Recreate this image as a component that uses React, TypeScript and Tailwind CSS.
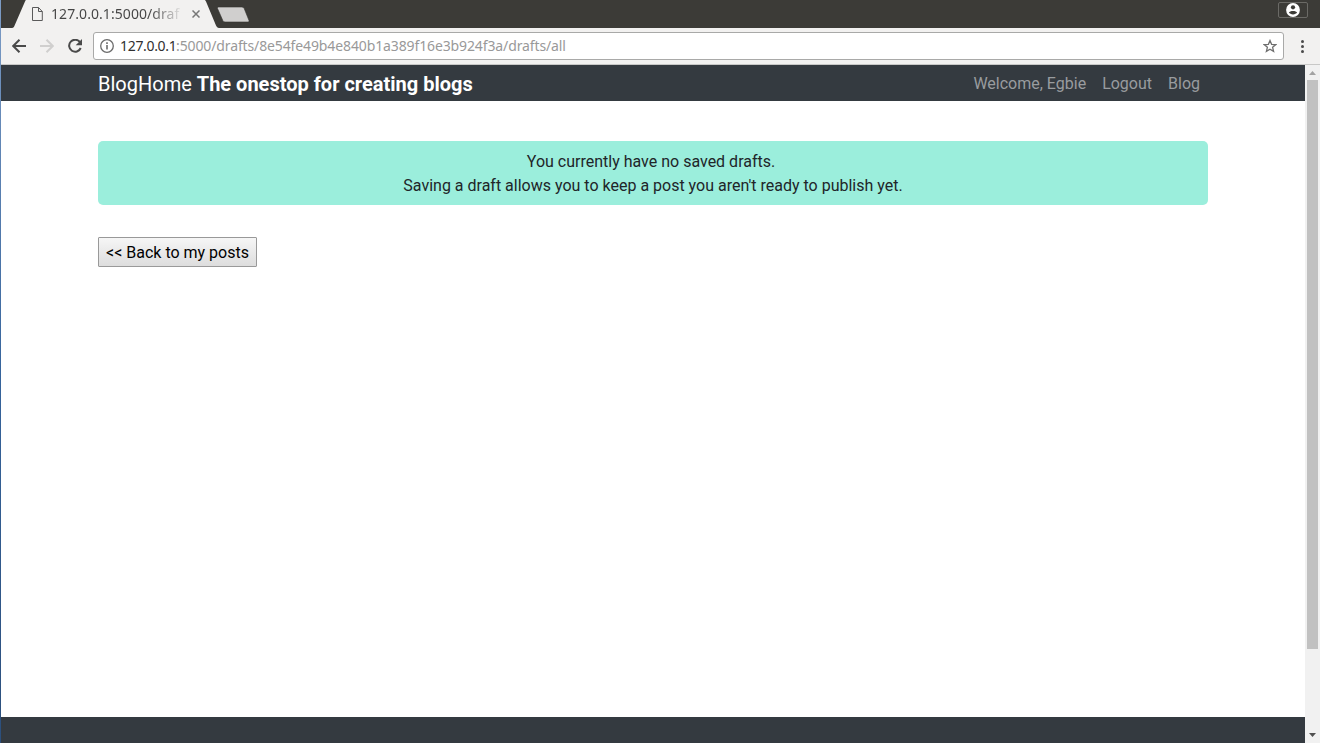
import React from "react";

function TabStrip() {
  return (
    <div className="flex h-7 shrink-0 items-start bg-[#3c3b37]">
      <div className="relative ml-[11px] h-7 w-[208px]">
        <svg className="absolute inset-0" width="208" height="28" viewBox="0 0 208 28">
          <path d="M0 28 C1.5 28 2 27 2.6 25.5 L13 1.5 L13.8 0 H193 L194 1.5 L204 25.5 C204.8 27 205.500 28 207 28 Z" fill="#f2f1f0" />
        </svg>
        <div className="relative flex h-7 items-center pl-5">
          <svg width="11" height="14" viewBox="0 0 11 14" fill="none" stroke="#5a5a5a">
            <path d="M0.500 0.500 H6.500 L10.300 4.500 V13.500 H0.500 Z" />
            <path d="M6.500 0.500 V4.500 H10.300" />
          </svg>
          <div className="ml-2 w-[132px] overflow-hidden whitespace-nowrap bg-[linear-gradient(90deg,#444_0,#444_100px,transparent_132px)] bg-clip-text font-['Noto_Sans',sans-serif] text-sm tracking-[0.07px] text-transparent">
            127.0.0.1:5000/draf
          </div>
          <svg className="ml-[9px]" width="8" height="8" viewBox="0 0 8 8" stroke="#777" strokeWidth="1.5">
            <path d="M0.500 0.500 L7.500 7.500 M7.500 0.500 L0.500 7.500" />
          </svg>
        </div>
      </div>
      <svg className="-ml-[4px] mt-[6px]" width="34" height="17" viewBox="0 0 34 17">
        <path d="M2.500 1 H26 Q27.500 1 28.200 2.500 L33 14.500 Q33.500 16 32 16 H9 Q7.500 16 6.800 14.500 L1.500 2.500 Q1 1 2.500 1 Z" fill="#d0cfce" stroke="#33322f" strokeWidth="0.600" />
      </svg>
      <div className="ml-auto mr-3 mt-[2px] flex h-4 w-[30px] items-center justify-center rounded-[2px] border border-[#6b6a66]">
        <svg width="14" height="14" viewBox="0 0 14 14">
          <circle cx="7" cy="7" r="6.900" fill="#fff" />
          <circle cx="7" cy="4.300" r="2.100" fill="#3c3b37" />
          <path d="M2.900 9.600 C3.600 7.500 10.400 7.500 11.100 9.600 C9.800 12 4.200 12 2.900 9.600 Z" fill="#3c3b37" />
        </svg>
      </div>
    </div>
  );
}

function Toolbar() {
  return (
    <div className="flex h-[37px] shrink-0 items-center border-b border-[#c8c8c7] bg-[#f2f1f0] pl-[11px]">
      <svg width="14" height="14" viewBox="0 0 14 14" fill="none" stroke="#4a4a4a" strokeWidth="2">
        <path d="M14 7 H1.500 M7.500 0.700 L1.200 7 L7.500 13.300" />
      </svg>
      <svg className="ml-[14px]" width="14" height="14" viewBox="0 0 14 14" fill="none" stroke="#d0cfce" strokeWidth="2">
        <path d="M0 7 H12.500 M6.500 0.700 L12.800 7 L6.500 13.300" />
      </svg>
      <svg className="ml-[14px]" width="14" height="14" viewBox="0 0 14 14">
        <path d="M12 3.200 A6 6 0 1 0 12.700 9" fill="none" stroke="#4a4a4a" strokeWidth="2" />
        <path d="M14 0 V6.300 H7.700 Z" fill="#4a4a4a" />
      </svg>
      <div className="ml-[11px] flex h-7 w-[1191px] items-center rounded-[3px] border border-[#a9a9a8] bg-white pl-[6px] pr-[6px]">
        <svg width="14" height="14" viewBox="0 0 14 14" fill="none" stroke="#6b6b6b">
          <circle cx="7" cy="7" r="6.300" strokeWidth="1.300" />
          <path d="M7 6 V10.500 M7 3.300 V4.900" strokeWidth="1.600" />
        </svg>
        <div className="ml-[6px] flex whitespace-nowrap font-['Noto_Sans',sans-serif] text-sm leading-5 text-[#999]">
          <span className="w-14 tracking-[-0.32px] text-[#303030]">127.0.0.1</span>
          <span className="tracking-[-0.12px]">:5000/drafts/8e54fe49b4e840b1a389f16e3b924f3a/drafts/all</span>
        </div>
        <svg className="ml-auto" width="14" height="14" viewBox="0 0 14 14" fill="none" stroke="#6f6f6f" strokeWidth="1.300">
          <path d="M7 1.500 L8.600 5.300 L12.800 5.600 L9.600 8.300 L10.600 12.400 L7 10.200 L3.400 12.400 L4.400 8.300 L1.200 5.600 L5.400 5.300 Z" />
        </svg>
      </div>
      <svg className="ml-[16px]" width="4" height="14" viewBox="0 0 4 14" fill="#4a4a4a">
        <circle cx="2.500" cy="2.500" r="1.500" />
        <circle cx="2.500" cy="7.500" r="1.500" />
        <circle cx="2.500" cy="12.500" r="1.500" />
      </svg>
    </div>
  );
}

function Scrollbar() {
  return (
    <div className="flex w-[15px] shrink-0 flex-col items-center bg-[#f1f1f1]">
      <svg className="mt-[6px] shrink-0" width="7" height="4" viewBox="0 0 7 4" fill="#a3a3a3">
        <path d="M3.500 0 L7 4 H0 Z" />
      </svg>
      <div className="mt-[5px] h-[569px] w-[11px] bg-[#c1c1c1]" />
      <svg className="mb-[6px] mt-auto shrink-0" width="7" height="4" viewBox="0 0 7 4" fill="#505050">
        <path d="M0 0 H7 L3.500 4 Z" />
      </svg>
    </div>
  );
}

function Page() {
  return (
    <div className="flex min-w-0 flex-1 flex-col bg-white font-[Roboto,sans-serif] text-base text-[#212529]">
      <nav className="flex h-9 shrink-0 items-center justify-between bg-[#343a40] pl-[97px] pr-[105px] pt-[2px]">
        <a className="text-xl leading-[30px] text-white">
          BlogHome <strong className="font-bold">The onestop for creating blogs</strong>
        </a>
        <div className="flex gap-4 text-[#999c9f]">
          <a>Welcome, Egbie</a>
          <a>Logout</a>
          <a>Blog</a>
        </div>
      </nav>
      <main className="flex-1 pl-[97px] pt-10">
        <div className="h-16 w-[1110px] rounded-[5px] bg-[#9beedc] pb-[7px] pt-[9px] text-center leading-6">
          <p>You currently have no saved drafts.&nbsp;</p>
          <p>Saving a draft allows you to keep a post you aren't ready to publish yet.</p>
        </div>
        <button className="mt-8 flex h-[30px] w-[159px] items-center justify-center whitespace-nowrap rounded-[1px] border border-[#999] bg-linear-to-b from-[#f6f6f6] to-[#dddddd] pt-[2px] text-base text-black">
          &lt;&lt; Back to my posts
        </button>
      </main>
      <footer className="h-[26px] shrink-0 bg-[#343a40]" />
    </div>
  );
}

export default function App() {
  return (
    <div className="flex h-[743px] w-[1320px] overflow-hidden">
      <div className="w-px shrink-0 bg-linear-to-b from-[#7d9cc5] via-[#36649c] to-[#2c4f7c]" />
      <div className="flex min-w-0 flex-1 flex-col">
        <TabStrip />
        <Toolbar />
        <div className="flex min-h-0 flex-1">
          <Page />
          <Scrollbar />
        </div>
      </div>
    </div>
  );
}
